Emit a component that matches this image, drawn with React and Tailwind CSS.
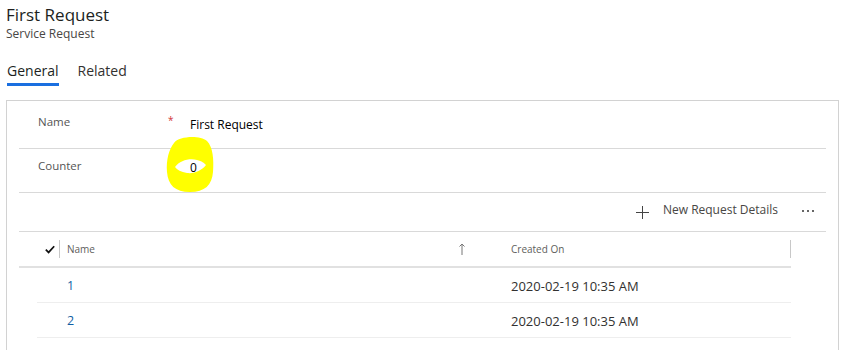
import React from 'react';

const rows = [
  { id: '1', created: '2020-02-19 10:35 AM' },
  { id: '2', created: '2020-02-19 10:35 AM' }
];

const Highlight = () => (
  <svg
    className="absolute left-[-30px] top-[-19px] pointer-events-none"
    width="60"
    height="66"
    viewBox="0 0 60 66"
  >
    <path
      d="M14 13 C19 6, 40 5, 47 11 C53 17, 54 30, 53 42 C52 55, 45 62, 30 62 C15 62, 8 55, 7 42 C6 30, 9 19, 14 13 Z"
      fill="#ffff00"
    />
    <path
      d="M15 37 C20 30, 30 28, 37 30 C42 31, 44 33, 46 35 C42 40, 35 44, 27 43 C21 42, 17 40, 15 37 Z"
      fill="#ffffff"
    />
  </svg>
);

const App = () => {
  return (
    <div className="w-[843px] h-[350px] overflow-hidden bg-white font-['Open_Sans','Noto_Sans',sans-serif] text-[#323130]">
      {/* header */}
      <div className="pl-[6px] pt-[4px]">
        <h1 className="text-[17px] leading-[22px] text-[#201f1e]">First Request</h1>
        <p className="text-[12px] leading-[16px] text-[#484644]">Service Request</p>
      </div>

      {/* tabs */}
      <div className="flex pl-[7px] mt-[19px] gap-[19px]">
        <div className="flex flex-col">
          <span className="text-[14px] leading-[20px] text-[#201f1e]">General</span>
          <span className="mt-[2px] h-[3px] bg-[#1a6fe0]"></span>
        </div>
        <div className="flex flex-col">
          <span className="text-[14px] leading-[20px] text-[#323130]">Related</span>
        </div>
      </div>

      {/* form panel */}
      <div className="ml-[6px] mt-[14px] w-[833px] border border-[#d2d2d2] px-[12px] pb-[30px]">
        <div className="flex h-[48px] border-b border-[#d9d9d9]">
          <div className="w-[149px] pl-[19px] pt-[13px] text-[11.5px] leading-[16px] text-[#555]">Name</div>
          <div className="w-[22px] pt-[13px] text-[10px] leading-[12px] text-[#d13438]">*</div>
          <div className="pt-[16px] text-[12px] leading-[16px] text-[#000]">First Request</div>
        </div>

        <div className="flex h-[44px] border-b border-[#d9d9d9]">
          <div className="w-[149px] pl-[19px] pt-[9px] text-[11.5px] leading-[16px] text-[#555]">Counter</div>
          <div className="w-[22px]"></div>
          <div className="relative pt-[11px] text-[12px] leading-[16px] text-[#000]">
            <Highlight />
            <span className="relative">0</span>
          </div>
        </div>

        {/* command bar */}
        <div className="flex h-[39px] justify-end items-start border-b border-[#d9d9d9] pt-[9px] pr-[12px]">
          <svg className="mt-[4px]" width="13" height="13" viewBox="0 0 13 13">
            <path d="M6.5 0 V13 M0 6.5 H13" stroke="#444" strokeWidth="1" />
          </svg>
          <span className="ml-[14px] text-[12px] leading-[16px] text-[#484644]">New Request Details</span>
          <svg className="ml-[24px] mt-[8px]" width="12" height="3" viewBox="0 0 12 3">
            <rect x="0" y="0" width="2" height="2" fill="#666" />
            <rect x="5" y="0" width="2" height="2" fill="#666" />
            <rect x="10" y="0" width="2" height="2" fill="#666" />
          </svg>
        </div>

        {/* grid */}
        <div className="w-[772px]">
          <div className="flex items-center h-[36px] border-b-2 border-[#e1e1e1]">
            <div className="w-[40px] flex justify-end pr-[4px]">
              <svg width="10" height="9" viewBox="0 0 10 9">
                <path d="M0.8 4.6 L3.6 7.4 L9.2 1.2" fill="none" stroke="#111" strokeWidth="1.7" />
              </svg>
            </div>
            <div className="w-px h-[18px] bg-[#c8c8c8]"></div>
            <div className="w-[443px] flex items-center justify-between pl-[7px] pr-[38px] text-[10px] leading-[14px] text-[#605e5c]">
              <span>Name</span>
              <svg width="6" height="12" viewBox="0 0 6 12">
                <path d="M3 1 V12 M0.5 3.5 L3 1 L5.5 3.5" fill="none" stroke="#777" strokeWidth="1" />
              </svg>
            </div>
            <div className="w-[287px] pl-[8px] text-[10px] leading-[14px] text-[#605e5c]">Created On</div>
            <div className="w-px h-[18px] bg-[#c8c8c8]"></div>
          </div>

          {rows.map((row) => (
            <div key={row.id} className="ml-[18px] flex items-center h-[35px] pt-[2px] border-b border-[#eeeeee]">
              <div className="w-[30px]"></div>
              <div className="w-[444px] text-[12.5px] leading-[16px] text-[#115ea3]">{row.id}</div>
              <div className="text-[13px] leading-[18px] text-[#323130]">{row.created}</div>
            </div>
          ))}
        </div>
      </div>
    </div>
  );
};

export default App;
